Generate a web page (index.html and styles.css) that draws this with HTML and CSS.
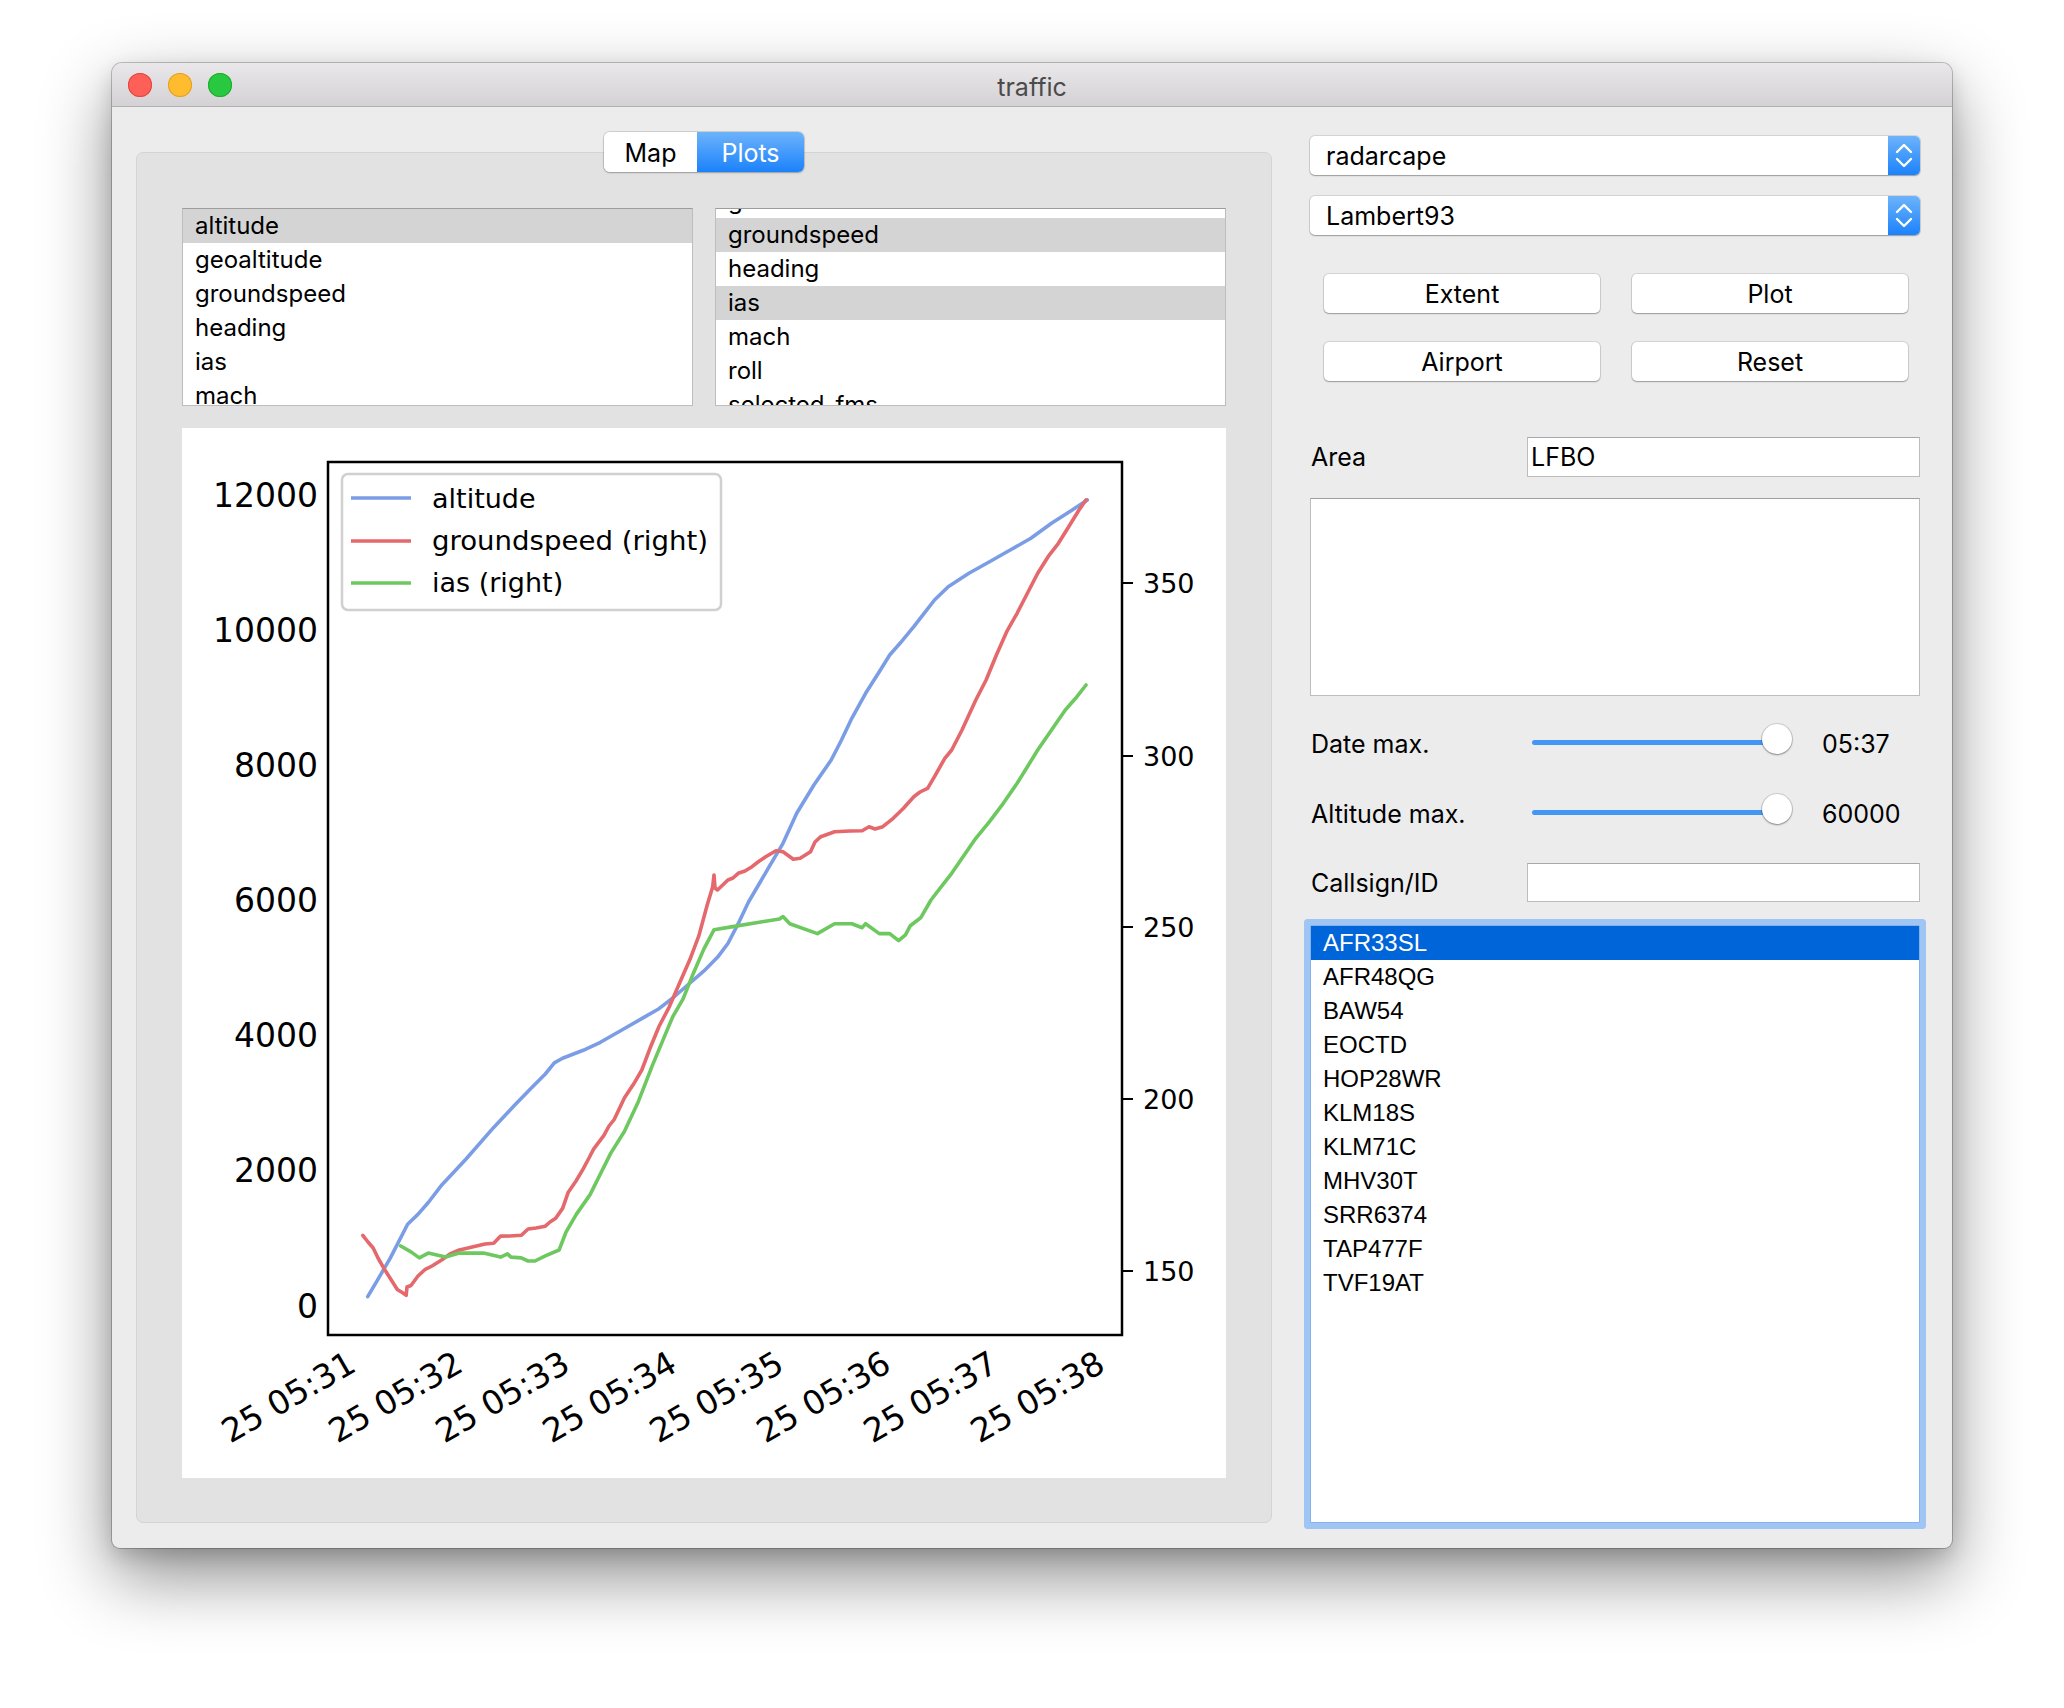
FILE: index.html
```html
<!DOCTYPE html>
<html>
<head>
<meta charset="utf-8">
<title>traffic</title>
<link rel="stylesheet" href="styles.css">
</head>
<body>
<div class="window">
  <div class="titlebar">
    <div class="lights">
      <span class="light red"></span>
      <span class="light yellow"></span>
      <span class="light green"></span>
    </div>
    <div class="title">traffic</div>
    <div></div>
  </div>
  <div class="content">
    <div class="left">
      <div class="tabs">
        <span class="seg seg-map">Map</span>
        <span class="seg seg-plots">Plots</span>
      </div>
      <div class="panel">
        <div class="lists">
          <div class="list">
            <div class="item sel">altitude</div>
            <div class="item">geoaltitude</div>
            <div class="item">groundspeed</div>
            <div class="item">heading</div>
            <div class="item">ias</div>
            <div class="item">mach</div>
            <div class="item">roll</div>
          </div>
          <div class="list">
            <div class="scrolled">
              <div class="item">altitude</div>
              <div class="item">geoaltitude</div>
              <div class="item sel">groundspeed</div>
              <div class="item">heading</div>
              <div class="item sel">ias</div>
              <div class="item">mach</div>
              <div class="item">roll</div>
              <div class="item">selected_fms</div>
            </div>
          </div>
        </div>
        <div class="plot">
          <svg class="chart" viewBox="182 428 1044 1050" width="1044" height="1050">
            <g fill="none" stroke-width="3.6" stroke-linejoin="round" stroke-linecap="round">
              <polyline stroke="#7b9de6" points="367.7,1296.6 376.6,1281.6 390.4,1257.9 407.6,1224.2 417.9,1214.4 428.3,1202.5 442,1184.7 466.1,1159 493.7,1127.4 514.3,1105.6 531.6,1087.8 545.3,1074 554.3,1062.9 562.6,1058.2 583.2,1050.3 600.4,1042.3 624.5,1028.5 645.2,1016.6 659,1008.7 672.8,998 690,983 703.7,971.2 717.5,957.3 727.9,943.5 738.2,923.7 748.5,902 769.2,866.7 783,843.3 796.7,813.3 813.9,785 831.2,760 841.5,740 851.8,718.3 865.6,693.3 879.3,671.7 889.7,655 900,643.3 913.8,626.7 924.1,613.3 934.5,600 948.2,586.7 968.9,573.3 989.5,561.7 1010.2,550 1030.9,538.3 1051.5,523.3 1072.2,510 1087.3,500"/>
              <polyline stroke="#e4686c" points="362.8,1235.3 368,1242 373.2,1248 378,1258 383.5,1267.7 390,1278 397.3,1289.5 403,1293 406.2,1295.4 407,1287 411,1285.5 418,1276 424.8,1269.7 432,1266 442,1259.8 450,1254 459.3,1250 468,1248 476.5,1246 485,1244 493.7,1243.2 500.6,1236.1 510,1236 521.2,1235.3 528.1,1229 536,1228 545.3,1226.2 550,1222 555.7,1218.3 562.6,1208.4 568.1,1192.6 576,1181 583.2,1168.9 589,1158 593.6,1149.1 603.9,1135.3 609,1126 614.2,1119.5 624.5,1097.7 634.9,1081.9 641.8,1070 650,1048.3 659,1026.5 669.3,1006.8 679.6,983 690,959.3 698.9,935.6 707.2,905 712.7,886.7 714,875 715,888 717.5,890 727.9,880 733,878 738.2,873.3 745,871 752,866.7 758,862 765.7,856.7 776,850.7 783,851.7 793.3,859.3 800.2,858.3 810.5,851.7 815,842 820.8,836.7 834.6,831.7 850,831 862.2,830.7 869,826.7 875,829 882.8,826.7 893.2,818.3 903.5,808.3 913.8,796.7 920,792 927.6,788.3 934.5,776.7 944.8,758.3 951.7,750 962,730 975.8,700 986.1,680 996.4,655 1006.7,631.7 1017.1,613.3 1027.4,593.3 1037.7,573.3 1048.1,556.7 1058.4,543.3 1068.7,526.7 1079,510 1086,500"/>
              <polyline stroke="#6dc85f" points="400.7,1246 411,1251.9 419.3,1257.9 428.3,1253.1 445.5,1257.1 459.3,1253.1 483.4,1253.1 500.6,1257.1 507.5,1253.9 510.9,1257.1 521.2,1257.9 528.1,1261 535,1261 545.3,1255.9 559.1,1250 566,1232.1 576.3,1214.4 590.1,1194.6 597,1180.7 610.8,1153.1 624.5,1131.3 638.3,1101.7 652.1,1066.1 664.5,1036.4 672.8,1016.6 683.1,998.9 693.4,973.2 703.7,949.4 714.1,929.7 731.3,926.9 762.3,921.7 779.5,919 783,916.6 789.8,923.7 817.4,933.6 834.6,923.7 851.8,923.7 862.2,927.7 865.6,923.7 879.3,933.6 889.7,933.6 898.6,940.7 905.5,934.8 910.3,925.7 920.7,917.8 931,900 941.3,886.7 951.7,873.3 962,858.3 975.8,838.3 989.5,821.7 1003.3,803.3 1017.1,783.3 1027.4,766.7 1037.7,750 1051.5,730 1065.3,710 1075.6,698.3 1086,685"/>
            </g>
            <rect x="328" y="462" width="794" height="873" fill="none" stroke="#000" stroke-width="2.5"/>
            <path d="M1122 583h11M1122 756h11M1122 927h11M1122 1099h11M1122 1271h11" stroke="#000" stroke-width="2"/>
            <g font-family="DejaVu Sans, sans-serif" font-size="33" text-anchor="end" fill="#000">
              <text x="318" y="507">12000</text>
              <text x="318" y="642">10000</text>
              <text x="318" y="777">8000</text>
              <text x="318" y="912">6000</text>
              <text x="318" y="1047">4000</text>
              <text x="318" y="1182">2000</text>
              <text x="318" y="1318">0</text>
            </g>
            <g font-family="DejaVu Sans, sans-serif" font-size="27" fill="#000">
              <text x="1143" y="593">350</text>
              <text x="1143" y="766">300</text>
              <text x="1143" y="937">250</text>
              <text x="1143" y="1109">200</text>
              <text x="1143" y="1281">150</text>
            </g>
            <g font-family="DejaVu Sans, sans-serif" font-size="33" text-anchor="end" fill="#000">
              <text x="358" y="1370" transform="rotate(-30 358 1370)">25 05:31</text>
              <text x="465" y="1370" transform="rotate(-30 465 1370)">25 05:32</text>
              <text x="572" y="1370" transform="rotate(-30 572 1370)">25 05:33</text>
              <text x="679" y="1370" transform="rotate(-30 679 1370)">25 05:34</text>
              <text x="786" y="1370" transform="rotate(-30 786 1370)">25 05:35</text>
              <text x="893" y="1370" transform="rotate(-30 893 1370)">25 05:36</text>
              <text x="1000" y="1370" transform="rotate(-30 1000 1370)">25 05:37</text>
              <text x="1107" y="1370" transform="rotate(-30 1107 1370)">25 05:38</text>
            </g>
            <rect x="342" y="474" width="379" height="136" rx="6" fill="#fff" fill-opacity="0.85" stroke="#d0d0d0" stroke-width="2.5"/>
            <path d="M351 498h60" stroke="#7b9de6" stroke-width="3.6"/>
            <path d="M351 541h60" stroke="#e4686c" stroke-width="3.6"/>
            <path d="M351 583h60" stroke="#6dc85f" stroke-width="3.6"/>
            <g font-family="DejaVu Sans, sans-serif" font-size="27" fill="#000">
              <text x="432" y="508">altitude</text>
              <text x="432" y="550" textLength="276" lengthAdjust="spacingAndGlyphs">groundspeed (right)</text>
              <text x="432" y="592">ias (right)</text>
            </g>
          </svg>
        </div>
      </div>
    </div>
    <div class="right">
      <div class="combo combo-first">
        <span class="combo-text">radarcape</span>
        <span class="combo-btn"><svg width="32" height="39" viewBox="0 0 32 39"><path d="M9 16L16 9L23 16M9 23L16 30L23 23" fill="none" stroke="#fff" stroke-width="2.4" stroke-linecap="round" stroke-linejoin="round"/></svg></span>
      </div>
      <div class="combo combo-second">
        <span class="combo-text">Lambert93</span>
        <span class="combo-btn"><svg width="32" height="39" viewBox="0 0 32 39"><path d="M9 16L16 9L23 16M9 23L16 30L23 23" fill="none" stroke="#fff" stroke-width="2.4" stroke-linecap="round" stroke-linejoin="round"/></svg></span>
      </div>
      <div class="buttons">
        <div class="btn">Extent</div>
        <div class="btn">Plot</div>
        <div class="btn">Airport</div>
        <div class="btn">Reset</div>
      </div>
      <div class="field-row area-row">
        <span class="lbl">Area</span>
        <div class="input">LFBO</div>
      </div>
      <div class="textarea"></div>
      <div class="slider-row date-row">
        <span class="lbl">Date max.</span>
        <div class="slider"><div class="track"></div><div class="thumb"></div></div>
        <span class="val">05:37</span>
      </div>
      <div class="slider-row alt-row">
        <span class="lbl">Altitude max.</span>
        <div class="slider"><div class="track"></div><div class="thumb"></div></div>
        <span class="val">60000</span>
      </div>
      <div class="field-row callsign-row">
        <span class="lbl">Callsign/ID</span>
        <div class="input"></div>
      </div>
      <div class="callsigns">
        <div class="cs sel">AFR33SL</div>
        <div class="cs">AFR48QG</div>
        <div class="cs">BAW54</div>
        <div class="cs">EOCTD</div>
        <div class="cs">HOP28WR</div>
        <div class="cs">KLM18S</div>
        <div class="cs">KLM71C</div>
        <div class="cs">MHV30T</div>
        <div class="cs">SRR6374</div>
        <div class="cs">TAP477F</div>
        <div class="cs">TVF19AT</div>
      </div>
    </div>
  </div>
</div>
</body>
</html>
```

FILE: styles.css
```css
* { box-sizing: border-box; }
html, body { margin: 0; }
body {
  background: #ffffff;
  padding: 63px 0 0 112px;
  font-family: "Inter", "Helvetica Neue", "Liberation Sans", sans-serif;
  color: #000;
  height: 1708px;
  overflow: hidden;
}
.window {
  width: 1840px;
  height: 1485px;
  background: #ececec;
  border-radius: 10px 10px 8px 8px;
  box-shadow: 0 0 0 1px rgba(0,0,0,0.22), 0 28px 70px rgba(0,0,0,0.45), 0 8px 20px rgba(0,0,0,0.15);
  display: flex;
  flex-direction: column;
  overflow: hidden;
}
.titlebar {
  height: 44px;
  flex: none;
  display: grid;
  grid-template-columns: 1fr auto 1fr;
  align-items: center;
  background: linear-gradient(#e9e7e9, #d4d2d4);
  border-bottom: 1px solid #b3b1b3;
}
.lights { display: flex; gap: 16px; padding-left: 16px; }
.light { width: 24px; height: 24px; border-radius: 50%; display: block; }
.red { background: #fe5f57; box-shadow: inset 0 0 0 1px #e2463f; }
.yellow { background: #febc2e; box-shadow: inset 0 0 0 1px #e1a125; }
.green { background: #28c840; box-shadow: inset 0 0 0 1px #1dad2b; }
.title { font-size: 25px; color: #4b4b4b; padding-top: 4px; }

.content {
  flex: 1;
  display: flex;
  padding: 25px 32px 25px 24px;
  gap: 38px;
}
.left {
  width: 1136px;
  flex: none;
  display: flex;
  flex-direction: column;
  align-items: center;
}
.tabs {
  display: flex;
  height: 40px;
  position: relative;
  z-index: 1;
  border-radius: 6px;
  box-shadow: 0 0 0 1px rgba(0,0,0,0.12), 0 1px 2px rgba(0,0,0,0.22);
}
.seg {
  display: flex;
  align-items: center;
  justify-content: center;
  font-size: 25px;
  height: 40px;
  padding-top: 2px;
}
.seg-map { width: 93px; background: #fff; border-radius: 6px 0 0 6px; color: #000; }
.seg-plots { width: 107px; background: linear-gradient(#6db3fb, #1b82fb); border-radius: 0 6px 6px 0; color: #fff; }

.panel {
  width: 1136px;
  height: 1371px;
  margin-top: -20px;
  background: #e2e2e2;
  border: 1px solid #d4d4d4;
  border-radius: 7px;
  padding: 55px 45px 44px;
}
.lists {
  display: grid;
  grid-template-columns: 1fr 1fr;
  gap: 22px;
  height: 198px;
}
.list {
  background: #fff;
  border: 1px solid #bdbdbd;
  border-top-color: #9c9c9c;
  overflow: hidden;
  height: 198px;
}
.scrolled { margin-top: -59px; }
.item {
  height: 34px;
  line-height: 34px;
  padding-left: 12px;
  font-size: 24px;
  white-space: nowrap;
}
.item.sel { background: #d4d4d4; }
.plot {
  margin-top: 22px;
  height: 1050px;
  background: #fff;
}
.chart { display: block; }

.right {
  width: 610px;
  flex: none;
  display: flex;
  flex-direction: column;
}
.combo {
  height: 39px;
  background: #fff;
  border-radius: 5px;
  box-shadow: 0 0 0 1px rgba(0,0,0,0.1), 0 1px 1.5px rgba(0,0,0,0.28);
  display: flex;
  align-items: center;
  justify-content: space-between;
}
.combo-first { margin-top: 4px; }
.combo-second { margin-top: 21px; }
.combo-text { font-size: 25px; padding-left: 16px; }
.combo-btn {
  width: 32px;
  height: 39px;
  border-radius: 0 5px 5px 0;
  background: linear-gradient(#6db3fb, #1b82fb);
  display: block;
}
.combo-btn svg { display: block; }
.buttons {
  margin-top: 39px;
  display: grid;
  grid-template-columns: 276px 276px;
  grid-auto-rows: 39px;
  column-gap: 32px;
  row-gap: 29px;
  padding-left: 14px;
}
.btn {
  background: #fff;
  border-radius: 5px;
  box-shadow: 0 0 0 1px rgba(0,0,0,0.1), 0 1px 1.5px rgba(0,0,0,0.28);
  display: flex;
  align-items: center;
  justify-content: center;
  font-size: 25px;
}
.field-row {
  display: grid;
  grid-template-columns: 217px 1fr;
  align-items: center;
}
.area-row { margin-top: 56px; height: 40px; }
.callsign-row { margin-top: 31px; height: 39px; }
.lbl { font-size: 25px; padding-left: 1px; white-space: nowrap; }
.input {
  height: 100%;
  background: #fff;
  border: 1px solid #bcbcbc;
  border-top-color: #a8a8a8;
  font-size: 25px;
  display: flex;
  align-items: center;
  padding-left: 3px;
}
.textarea {
  margin-top: 21px;
  height: 198px;
  background: #fff;
  border: 1px solid #bdbdbd;
  border-top-color: #9e9e9e;
}
.slider-row {
  display: flex;
  align-items: center;
  height: 40px;
}
.slider-row .lbl { width: 217px; flex: none; padding-top: 4px; }
.slider-row .val { padding-top: 4px; }
.date-row { margin-top: 26px; }
.alt-row { margin-top: 30px; }
.slider {
  width: 295px;
  flex: none;
  display: flex;
  align-items: center;
  height: 40px;
}
.track {
  width: 245px;
  margin-left: 5px;
  height: 5px;
  border-radius: 3px;
  background: #4396f3;
}
.thumb {
  width: 30px;
  height: 30px;
  margin-left: -15px;
  margin-top: -6px;
  border-radius: 50%;
  background: #fff;
  box-shadow: 0 0 0 1px rgba(0,0,0,0.12), 0 1px 2px rgba(0,0,0,0.35);
}
.val { font-size: 25px; }
.callsigns {
  margin-top: 23px;
  height: 598px;
  background: #fff;
  border: 1px solid #86b1ea;
  box-shadow: 0 0 0 6px #9fc5f4;
  border-radius: 1px;
  font-family: "Liberation Sans", Arial, sans-serif;
}
.cs {
  height: 34px;
  line-height: 34px;
  padding-left: 12px;
  font-size: 24px;
}
.cs.sel { background: #0065d9; color: #fff; }
```
